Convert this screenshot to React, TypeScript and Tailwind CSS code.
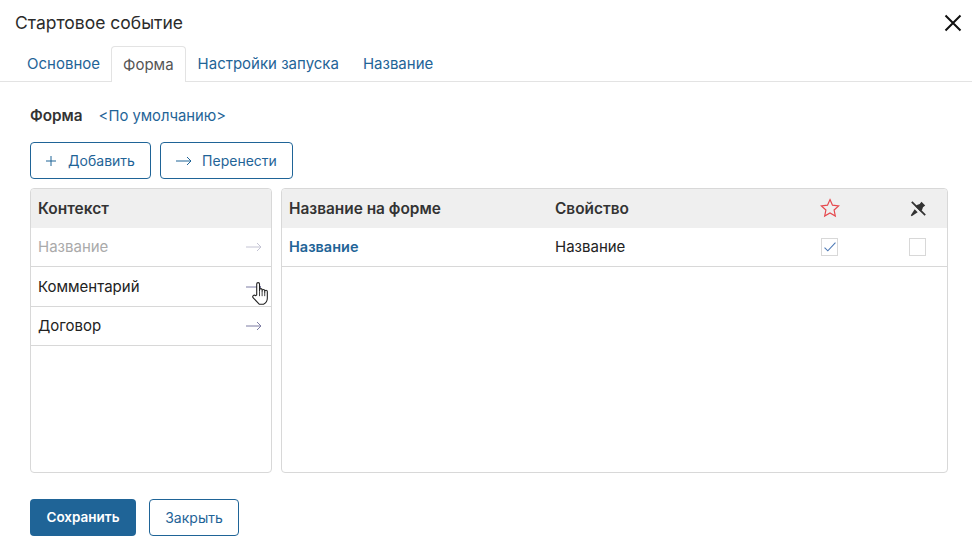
const blue = 'text-[#1f6497]';

function Arrow({ className }: { className: string }) {
  return (
    <svg width="16" height="10" viewBox="0 0 16 10" fill="none" stroke="currentColor" strokeWidth="1" className={className}>
      <path d="M0 5h15M11 1l4 4-4 4" />
    </svg>
  );
}

function Star() {
  return (
    <svg width="20" height="20" viewBox="0 0 20 20" fill="none" stroke="#e5484d" strokeWidth="1.2">
      <path d="M10 1.600l2.500 5.600 6.100.7-4.500 4.100 1.200 6-5.300-3-5.300 3 1.200-6L1.400 7.900l6.100-.7z" />
    </svg>
  );
}

function Pin() {
  return (
    <svg width="16" height="16" viewBox="0 0 16 16" fill="none">
      <path d="M11.500.8l3.700 3.700-2.200 1.800-1 2.800-1.600 1.400-4.900-4.900 1.400-1.600 2.800-1z" fill="#333" />
      <path d="M4.700 8.300l3 3-6 3.900-.9-.9z" fill="#333" />
      <path d="M1.800.8l13.400 13.400" stroke="#333" strokeWidth="1.800" />
    </svg>
  );
}

function Hand() {
  return (
    <svg width="19" height="26" viewBox="0 0 17 24" className="absolute left-[220px] top-[92px]">
      <path
        d="M5 13V2.800a1.300 1.300 0 0 1 2.600 0V9.500V8.200a1.200 1.200 0 0 1 2.400 0v1.500-.7a1.200 1.200 0 0 1 2.400 0v1.200-.4a1.200 1.200 0 0 1 2.400 0v6.200c0 2.500-1.500 4.500-3.500 5.500H7.500L1.800 15.500a1.400 1.400 0 0 1 2-2z"
        fill="#fff"
        stroke="#222"
        strokeWidth="1"
        strokeLinejoin="round"
      />
      <path d="M7.600 10v4M10 10v4M12.400 10v4" stroke="#222" strokeWidth="0.800" />
    </svg>
  );
}

const rows = [
  { name: 'Название', muted: true, h: 'h-[39px]' },
  { name: 'Комментарий', muted: false, h: 'h-[40px] pt-px' },
  { name: 'Договор', muted: false, h: 'h-[39px]' },
];

export default function App() {
  return (
    <div className="w-[972px] h-[543px] bg-white overflow-hidden text-[15px] text-[#222] font-['Inter','Roboto',sans-serif]">
      <div className="h-[46px] flex items-center justify-between pl-[15px] pr-[10px]">
        <h1 className="text-[17.500px] text-[#2b2b2b]">Стартовое событие</h1>
        <svg width="18" height="18" viewBox="0 0 18 18" stroke="#111" strokeWidth="2" className="mb-px">
          <path d="M1.500 1.500l15 15M16.500 1.500l-15 15" />
        </svg>
      </div>

      <div className={`h-[36px] flex items-stretch border-b border-[#e3e3e3] pl-[15px] ${blue}`}>
        <span className="pl-3 pr-[11px] flex items-center pt-px">Основное</span>
        <span className="pl-[11px] pr-[11px] flex items-center bg-white text-[#555] border border-b-0 border-[#e3e3e3] rounded-t h-[36px] pt-px">Форма</span>
        <span className="px-3 flex items-center pt-px">Настройки запуска</span>
        <span className="px-3 flex items-center pt-px">Название</span>
      </div>

      <div className="pl-[30px] pr-[24px]">
        <div className="h-[66px] flex items-center gap-[16px] pt-[2px]">
          <span className="font-semibold text-[#333] text-[15.300px]">Форма</span>
          <span className={`${blue} text-[14.800px]`}>&lt;По умолчанию&gt;</span>
        </div>

        <div className="flex gap-[9px] -mt-[6px]">
          <button className={`w-[121px] h-[37px] flex items-center justify-center gap-[12px] border border-[#1f6497] rounded text-sm ${blue}`}>
            <svg width="10" height="10" viewBox="0 0 10 10" stroke="currentColor" strokeWidth="1">
              <path d="M5 0v10M0 5h10" />
            </svg>
            Добавить
          </button>
          <button className={`w-[133px] h-[37px] flex items-center justify-center gap-[10px] border border-[#1f6497] rounded text-sm ${blue}`}>
            <Arrow className="" />
            Перенести
          </button>
        </div>

        <div className="flex gap-[9px] mt-[9px] h-[285px]">
          <div className="relative w-[242px] border border-[#d8d8d8] rounded">
            <div className="h-[39px] bg-[#efefef] flex items-center pl-[7px] font-semibold text-[15.500px] text-[#333] rounded-t">Контекст</div>
            {rows.map((r) => (
              <div
                key={r.name}
                className={`${r.h} flex items-center justify-between pl-[7px] pr-[9px] border-b border-[#d8d8d8] ${r.muted ? 'text-[#aaaaaa]' : 'text-[#222]'}`}
              >
                {r.name}
                <Arrow className={r.muted ? 'text-[#c4c4d4]' : 'text-[#7d7da3]'} />
              </div>
            ))}
            <Hand />
          </div>

          <div className="flex-1 border border-[#d8d8d8] rounded">
            <div className="h-[39px] bg-[#efefef] flex items-center font-semibold text-[15.400px] text-[#333] rounded-t">
              <span className="w-[273px] pl-[7px]">Название на форме</span>
              <span className="w-[265px]">Свойство</span>
              <span className="w-[90px] flex mb-px"><Star /></span>
              <span className="flex"><Pin /></span>
            </div>
            <div className="h-[39px] flex items-center border-b border-[#d8d8d8]">
              <span className={`w-[273px] pl-[7px] font-semibold text-[14.500px] ${blue}`}>Название</span>
              <span className="w-[265px]">Название</span>
              <span className="w-[88px] flex">
                <span className="w-[17px] h-[18px] ml-px border border-[#d8d8d8] flex items-center justify-center">
                  <svg width="12" height="10" viewBox="0 0 11 9" fill="none" stroke="#4d79b5" strokeWidth="1">
                    <path d="M0.500 5l3 3 7-7.500" />
                  </svg>
                </span>
              </span>
              <span className="w-[17px] h-[18px] ml-px border border-[#d8d8d8]" />
            </div>
          </div>
        </div>

        <div className="flex gap-[13px] mt-[26px]">
          <button className="w-[106px] h-[37px] rounded bg-[#1f6497] text-white font-semibold text-[13.500px]">Сохранить</button>
          <button className={`w-[90px] h-[37px] rounded border border-[#1f6497] text-sm ${blue}`}>Закрыть</button>
        </div>
      </div>
    </div>
  );
}
